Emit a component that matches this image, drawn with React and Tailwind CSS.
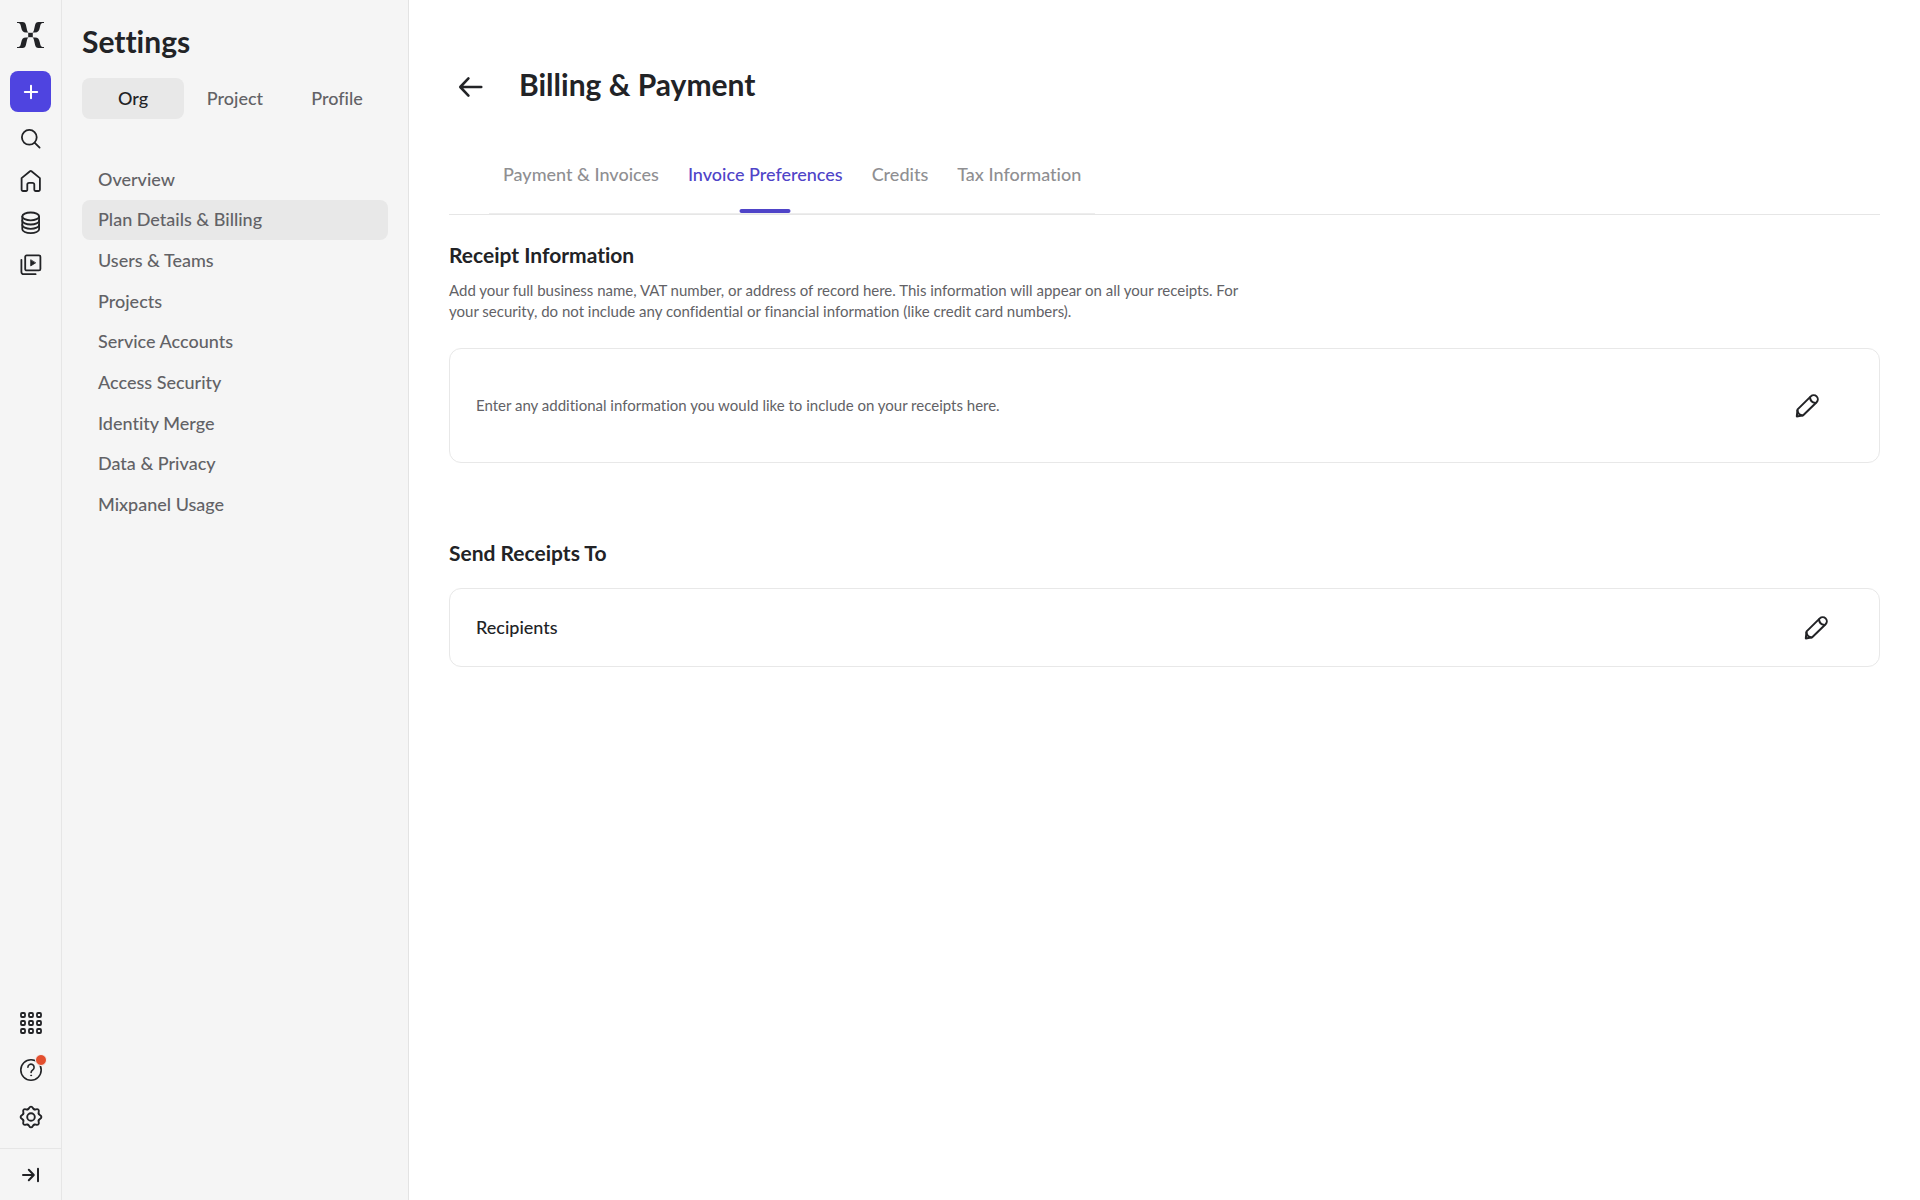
import React, { useState } from "react";
import clsx from "clsx";

const navItems = [
  "Overview",
  "Plan Details & Billing",
  "Users & Teams",
  "Projects",
  "Service Accounts",
  "Access Security",
  "Identity Merge",
  "Data & Privacy",
  "Mixpanel Usage",
];

const billingTabs = [
  "Payment & Invoices",
  "Invoice Preferences",
  "Credits",
  "Tax Information",
];

const Icon = ({ size = 24, width = 2, children }) => (
  <svg
    width={size}
    height={size}
    viewBox="0 0 24 24"
    fill="none"
    stroke="currentColor"
    strokeWidth={width}
    strokeLinecap="round"
    strokeLinejoin="round"
    aria-hidden="true"
  >
    {children}
  </svg>
);

const logoArm =
  "M0 0H5.5C7.6 0 8.4 1 8.9 3L9.7 6.5C10.1 8.6 10.6 10.2 11.6 10.4H9C6 10.4 5 9 4.3 6L3.7 3.6C3.2 1.6 2.5 1.1 0 1.1Z";

const Logo = () => (
  <svg width="27" height="26" viewBox="0 0 27 26" fill="currentColor" role="img" aria-label="Mixpanel">
    <path d={logoArm} />
    <path d={logoArm} transform="matrix(-1 0 0 1 27 0)" />
    <path d={logoArm} transform="matrix(1 0 0 -1 0 26)" />
    <path d={logoArm} transform="matrix(-1 0 0 -1 27 26)" />
    <rect x="11.2" y="10.8" width="4.6" height="4.4" />
  </svg>
);

const SearchIcon = () => (
  <Icon width={1.8}>
    <circle cx="10.3" cy="10.3" r="7.4" />
    <path d="m15.8 15.8 4.8 4.8" />
  </Icon>
);

const HomeIcon = () => (
  <Icon width={1.8}>
    <path d="M2.6 9.1 11 2.2a1.2 1.2 0 0 1 1.5 0l8.4 6.9V20.6a1.4 1.4 0 0 1-1.4 1.4h-3a1.2 1.2 0 0 1-1.2-1.2v-5.2a1.8 1.8 0 0 0-1.8-1.8h-3.400a1.800 1.800 0 0 0-1.800 1.800v5.200a1.200 1.200 0 0 1-1.200 1.200H4a1.400 1.400 0 0 1-1.400-1.400Z" />
  </Icon>
);

const DataIcon = () => (
  <Icon width={1.8}>
    <ellipse cx="11.7" cy="5.4" rx="8.4" ry="3.9" />
    <path d="M3.3 5.4v12.8c0 2.2 3.8 3.9 8.4 3.9s8.4-1.7 8.4-3.9v-12.8" />
    <path d="M3.3 9.7c0 2.1 3.8 3.8 8.4 3.8s8.4-1.7 8.4-3.8M3.3 14c0 2.1 3.8 3.8 8.4 3.8s8.4-1.7 8.4-3.8" />
  </Icon>
);

const ReplayIcon = () => (
  <Icon width={1.8}>
    <rect x="6.2" y="2.4" width="15.2" height="15" rx="1.4" />
    <path d="M2.4 6.8v12.2a2.2 2.2 0 0 0 2.2 2.2H16.6" />
    <path d="M11.7 7.1v5.8l4.7-2.9Z" fill="currentColor" strokeWidth="0.8" />
  </Icon>
);

const AppsIcon = () => (
  <Icon width={1.8}>
    {[4, 12, 20].map((y) =>
      [4, 12, 20].map((x) => (
        <rect key={`${x}-${y}`} x={x - 2} y={y - 2} width="4" height="4" rx="1" />
      ))
    )}
  </Icon>
);

const HelpIcon = () => (
  <Icon width={1.6}>
    <circle cx="12" cy="12" r="10.2" />
    <path d="M8.9 9.2a3.1 3.1 0 1 1 4.9 2.6c-1.1.8-1.7 1.3-1.7 2.6" />
    <circle cx="12.1" cy="17.4" r="0.5" fill="currentColor" strokeWidth="0.9" />
  </Icon>
);

// one bump of the cog, repeated every 45 degrees
const cogBump = "M8.8 4.3C10.4 3.8 10 1.6 12 1.6S13.6 3.8 15.2 4.3";

const GearIcon = () => (
  <Icon width={1.9}>
    {[0, 45, 90, 135, 180, 225, 270, 315].map((deg) => (
      <path key={deg} d={cogBump} transform={`rotate(${deg} 12 12)`} />
    ))}
    <circle cx="12" cy="12" r="3.8" />
  </Icon>
);

const ExpandIcon = () => (
  <Icon width={2}>
    <path d="M4 12h10.5M9.8 6.8l5 5.2-5 5.2M19 5.8v12.4" />
  </Icon>
);

const PencilIcon = () => (
  <Icon width={2}>
    <path d="m2.6 15.4 13.2-13a4.1 4.1 0 0 1 5.8 5.8L8.2 21.2l-6.4 1.2Z" />
    <path d="M15 3.4c.2 3 2.3 5.2 5.4 5.5M2.4 16.6c.5 2.7 2.2 4.400 5 4.900" />
  </Icon>
);

const RailButton = ({ label, children }) => (
  <button type="button" aria-label={label} className="relative flex size-10 items-center justify-center">
    {children}
  </button>
);

const Rail = () => (
  <nav aria-label="Main" className="flex w-[62px] shrink-0 flex-col items-center border-r border-[#e6e6e6] text-[#222326]">
    <a href="#home" className="mt-[22px]">
      <Logo />
    </a>
    <button
      type="button"
      aria-label="Create new"
      className="mt-[23px] flex size-[41px] items-center justify-center rounded-lg bg-[#4f44e0] text-white"
    >
      <Icon size={24}>
        <path d="M12 5.8v12.4M5.8 12h12.4" />
      </Icon>
    </button>
    <div className="mt-[7px] flex flex-col gap-[2px]">
      <RailButton label="Search"><SearchIcon /></RailButton>
      <RailButton label="Home"><HomeIcon /></RailButton>
      <RailButton label="Data"><DataIcon /></RailButton>
      <RailButton label="Session replay"><ReplayIcon /></RailButton>
    </div>
    <div className="mt-auto flex flex-col gap-[7px] pb-[11px]">
      <RailButton label="Apps"><AppsIcon /></RailButton>
      <RailButton label="Help">
        <HelpIcon />
        <span className="absolute top-1 right-1 size-3 rounded-full border border-[#f5f5f5] bg-[#e34f2f]" />
      </RailButton>
      <RailButton label="Settings"><GearIcon /></RailButton>
    </div>
    <div className="flex h-[52px] w-full items-center justify-center border-t border-[#e6e6e6]">
      <RailButton label="Expand navigation"><ExpandIcon /></RailButton>
    </div>
  </nav>
);

const Sidebar = () => {
  const [scope, setScope] = useState("Org");

  return (
    <aside className="w-[347px] shrink-0 border-r border-[#e3e3e3] px-5 pt-[21px] text-[18px] font-medium">
      <h2 className="text-[30px] leading-10 font-bold text-[#222326]">Settings</h2>
      <div className="mt-[17px] grid grid-cols-3">
        {["Org", "Project", "Profile"].map((s) => (
          <button
            key={s}
            type="button"
            onClick={() => setScope(s)}
            className={clsx(
              "h-[41px] rounded-lg",
              s === scope ? "bg-[#e8e8e8] text-[#222326]" : "text-[#626266]"
            )}
          >
            {s}
          </button>
        ))}
      </div>
      <ul className="mt-10 grid h-[366px] auto-rows-fr text-[#626266]">
        {navItems.map((item) => (
          <li key={item}>
            <a
              href="#settings"
              className={clsx(
                "flex h-full items-center rounded-lg px-4",
                item === "Plan Details & Billing" && "bg-[#e8e8e8]"
              )}
            >
              {item}
            </a>
          </li>
        ))}
      </ul>
    </aside>
  );
};

const App = () => {
  const [tab, setTab] = useState("Invoice Preferences");

  return (
    <div className="flex min-h-screen bg-[#f5f5f5] font-['Lato',sans-serif] [font-variant-ligatures:none]">
      <Rail />
      <Sidebar />
      <main className="min-w-0 flex-1 bg-white px-10 pt-[60px] text-[#222326]">
        <div className="flex items-end gap-[26px]">
          <button type="button" aria-label="Back" className="flex h-[42px] w-11 items-center justify-center">
            <Icon size={28} width={2.2}>
              <path d="M20.8 12H3.2M9.8 4.7 2.8 12l7 7.3" />
            </Icon>
          </button>
          <h1 className="text-[30px] leading-[48px] font-bold">Billing &amp; Payment</h1>
        </div>

        <div className="mt-[27px] border-b border-[#e6e6e6] px-10">
          <div role="tablist" className="flex w-fit gap-[29px] border-b border-[#ededed] px-[14px]">
            {billingTabs.map((t) => (
              <button
                key={t}
                type="button"
                role="tab"
                aria-selected={t === tab}
                onClick={() => setTab(t)}
                className={clsx(
                  "relative h-[78px] text-[18px] font-medium",
                  t === tab ? "text-[#4f44c8]" : "text-[#8f8f92]"
                )}
              >
                {t}
                {t === tab && (
                  <span className="absolute bottom-0 left-1/2 h-1 w-[51px] -translate-x-1/2 rounded-xs bg-[#4f44c8]" />
                )}
              </button>
            ))}
          </div>
        </div>

        <section className="pt-6">
          <h2 className="text-[21px] leading-8 font-bold">Receipt Information</h2>
          <p className="mt-[9px] max-w-[800px] text-[15px] leading-[21px] text-[#626266]">
            Add your full business name, VAT number, or address of record here. This information will appear
            on all your receipts. For your security, do not include any confidential or financial information
            (like credit card numbers).
          </p>
          <div className="mt-[26px] flex h-[115px] items-center justify-between rounded-xl border border-[#e8e8e8] pr-[52px] pl-[26px]">
            <p className="text-[15px] text-[#626266]">
              Enter any additional information you would like to include on your receipts here.
            </p>
            <button type="button" aria-label="Edit receipt information" className="flex size-10 items-center justify-center">
              <PencilIcon />
            </button>
          </div>
        </section>

        <section className="pt-[74px]">
          <h2 className="text-[21px] leading-8 font-bold">Send Receipts To</h2>
          <div className="mt-[19px] flex h-[79px] items-center justify-between rounded-xl border border-[#e8e8e8] pr-[43px] pl-[26px]">
            <h3 className="text-[18px] font-medium">Recipients</h3>
            <button type="button" aria-label="Edit recipients" className="flex size-10 items-center justify-center">
              <PencilIcon />
            </button>
          </div>
        </section>
      </main>
    </div>
  );
};

export default App;
